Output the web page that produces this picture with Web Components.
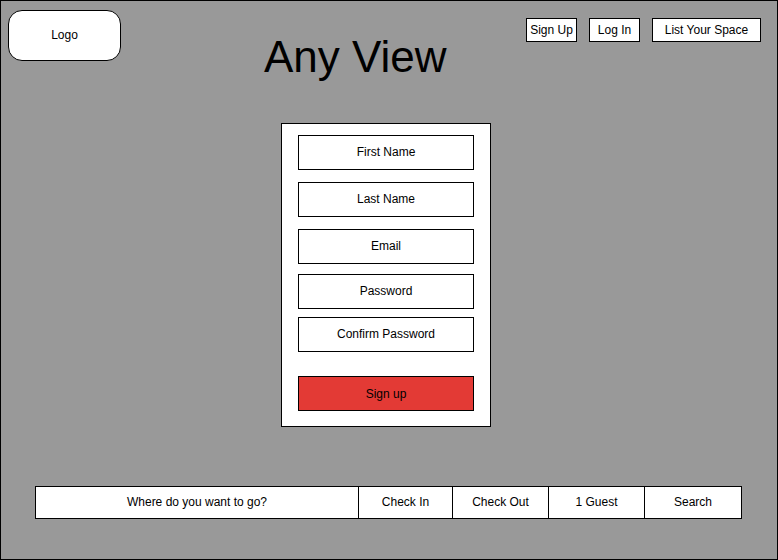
<!DOCTYPE html>
<html lang="en">
<head>
<meta charset="utf-8">
<meta name="viewport" content="width=device-width, initial-scale=1">
<title>Any View</title>
<style>
  body { margin: 0; font: 12px/16px "Liberation Sans", Arial, sans-serif; color: #000; }
</style>
</head>
<body>
<any-view></any-view>

<script>
const define = (name, html, setup) => {
  const template = document.createElement('template');
  template.innerHTML = '<style>*, :host { box-sizing: border-box; }</style>' + html;
  customElements.define(name, class extends HTMLElement {
    constructor() {
      super();
      this.attachShadow({ mode: 'open' }).append(template.content.cloneNode(true));
    }
    connectedCallback() {
      if (setup) setup(this, this.shadowRoot);
    }
  });
};

define('site-logo', `
  <style>
    :host { display: block; }
    a { display: flex; align-items: center; justify-content: center; width: 113px; min-height: 51px;
        padding-bottom: 2px; border: 1px solid #000; border-radius: 14px; background: #fff;
        color: inherit; text-decoration: none; }
  </style>
  <a href="#"><slot></slot></a>`);

define('box-button', `
  <style>
    :host { display: block; }
    button { display: block; width: 100%; min-height: var(--box-height, 24px); margin: 0;
             padding: 0 var(--box-pad, 3px); border: 1px solid #000; border-radius: 0;
             background: var(--box-fill, #fff); color: inherit; font: inherit; white-space: nowrap; cursor: pointer; }
  </style>
  <button type="button"><slot></slot></button>`);

define('box-field', `
  <style>
    :host { display: block; }
    input { display: block; width: 100%; min-width: 0; height: var(--box-height, 35px); margin: 0;
            padding: 0 4px 2px; border: var(--box-border, 1px solid #000); border-radius: 0;
            background: #fff; color: inherit; font: inherit; text-align: center; }
    input::placeholder { color: #000; opacity: 1; }
  </style>
  <input>`, (host, root) => {
  const input = root.querySelector('input');
  const label = host.getAttribute('label');
  input.type = host.getAttribute('type') || 'text';
  input.placeholder = label;
  input.setAttribute('aria-label', label);
});

define('site-header', `
  <style>
    :host { display: grid; grid-template-columns: auto 9fr auto 5fr auto; align-items: start;
            padding: 9px 16px 0 7px; }
    h1 { grid-column: 3; margin: 23px 0 0; font-size: 44px; line-height: 48px; font-weight: 400; white-space: nowrap; }
    nav { grid-column: 5; display: flex; gap: 12px; margin-top: 8px; }
    .short { width: 51px; }
    .long { width: 109px; }
  </style>
  <site-logo>Logo</site-logo>
  <h1>Any View</h1>
  <nav aria-label="Account">
    <box-button class="short">Sign Up</box-button>
    <box-button class="short">Log In</box-button>
    <box-button class="long">List Your Space</box-button>
  </nav>`);

define('sign-up-card', `
  <style>
    :host { display: block; width: 210px; --box-height: 35px; }
    form { display: flex; flex-direction: column; padding: 11px 16px 15px; border: 1px solid #000; background: #fff; }
    .names { display: grid; gap: 12px; }
    .secrets { display: grid; gap: 8px; margin: 10px 0 24px; }
    box-button { --box-fill: #e33a35; }
  </style>
  <form aria-label="Sign up">
    <div class="names">
      <box-field label="First Name"></box-field>
      <box-field label="Last Name"></box-field>
      <box-field label="Email" type="email"></box-field>
    </div>
    <div class="secrets">
      <box-field label="Password" type="password"></box-field>
      <box-field label="Confirm Password" type="password"></box-field>
    </div>
    <box-button>Sign up</box-button>
  </form>`);

define('search-bar', `
  <style>
    :host { display: block; }
    form { display: grid; grid-template-columns: 322fr 93fr 95fr 95fr 96fr; gap: 1px;
           border: 1px solid #000; background: #000; --box-height: 31px; --box-border: 0; }
    select, button { width: 100%; min-width: 0; height: 31px; margin: 0; padding: 0 0 2px; border: 0; border-radius: 0;
           background: #fff; color: inherit; font: inherit; text-align: center; text-align-last: center;
           appearance: none; cursor: pointer; }
  </style>
  <form role="search" aria-label="Find a space">
    <box-field label="Where do you want to go?"></box-field>
    <box-field label="Check In"></box-field>
    <box-field label="Check Out"></box-field>
    <select aria-label="Guests"><option>1 Guest</option></select>
    <button type="button">Search</button>
  </form>`);

define('any-view', `
  <style>
    :host { display: flex; flex-direction: column; min-height: 100vh; border: 1px solid #000; background: #999; }
    main { flex: 1; display: flex; justify-content: center; align-items: flex-start; padding: 42px 6px 42px 0; }
    footer { padding: 0 35px 40px 34px; }
  </style>
  <site-header></site-header>
  <main><sign-up-card></sign-up-card></main>
  <footer><search-bar></search-bar></footer>`);
</script>
</body>
</html>
